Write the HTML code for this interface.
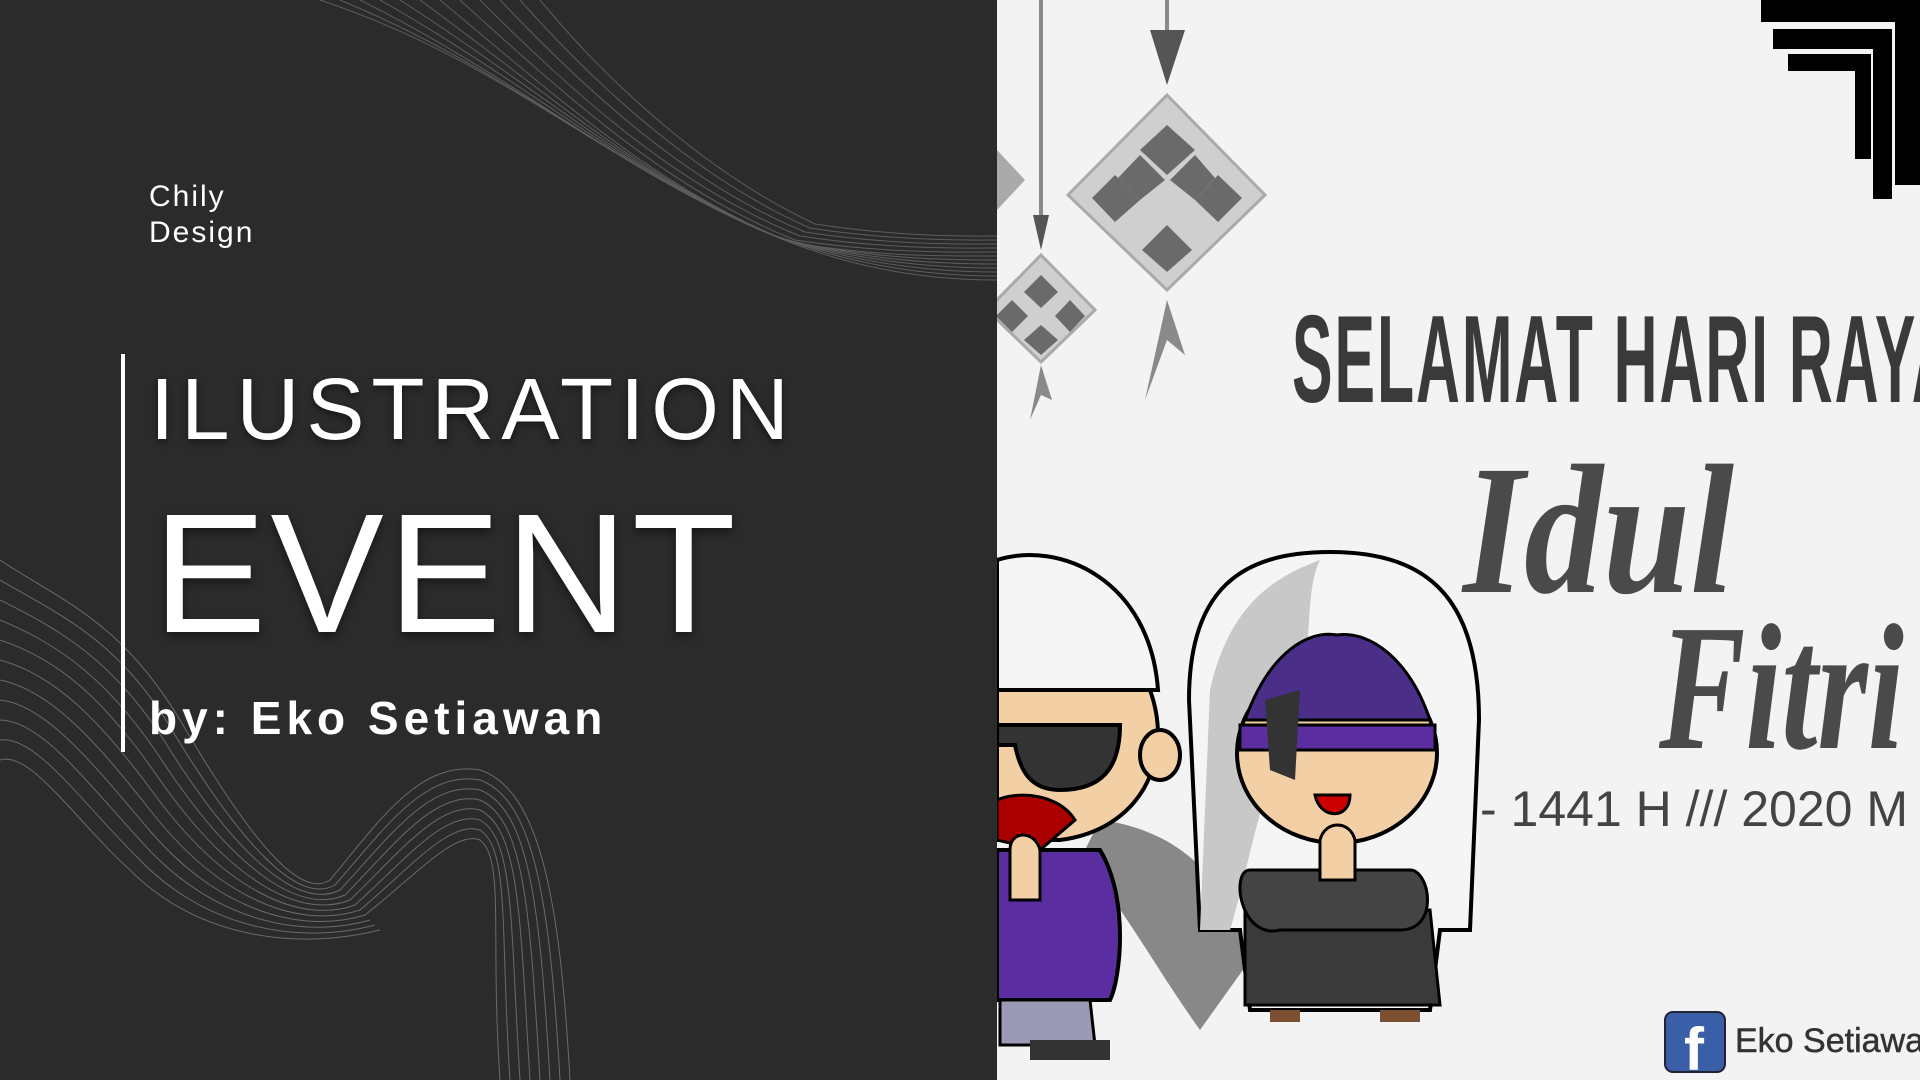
<!DOCTYPE html>
<html><head><meta charset="utf-8"><style>
*{margin:0;padding:0}
body{width:1920px;height:1080px;overflow:hidden;background:#f3f3f3;position:relative;font-family:"Liberation Sans",sans-serif}
#left{position:absolute;left:0;top:0;width:997px;height:1080px;background:#2c2b2c;overflow:hidden}
.t{position:absolute;color:#fff;white-space:nowrap}
</style></head><body>
<div id="left">
<svg width="997" height="1080" style="position:absolute;left:0;top:0" fill="none" stroke="#6a6a6a" stroke-width="1">
<g opacity="0.8">
<path d="M320 0 C500 60 600 160 760 230 C850 270 930 280 997 280"/>
<path d="M340 0 C510 70 610 165 765 232 C855 268 935 276 997 276"/>
<path d="M360 0 C520 80 620 170 770 234 C860 266 940 272 997 272"/>
<path d="M380 0 C530 85 630 175 775 236 C865 264 945 268 997 268"/>
<path d="M400 0 C540 90 640 180 780 238 C870 262 950 264 997 264"/>
<path d="M420 0 C550 95 650 185 785 240 C875 260 955 260 997 260"/>
<path d="M440 0 C560 100 660 190 790 242 C880 258 960 256 997 256"/>
<path d="M460 0 C570 100 670 190 795 240 C885 254 965 252 997 252"/>
<path d="M480 0 C580 100 680 188 800 236 C890 250 970 248 997 248"/>
<path d="M500 0 C590 95 690 185 805 232 C895 246 975 244 997 244"/>
<path d="M520 0 C600 90 700 180 810 228 C900 242 980 240 997 240"/>
<path d="M540 0 C610 85 710 175 815 224 C905 238 985 236 997 236"/>
</g>
<g>
<path d="M0 560 C60 600 120 620 180 720 C250 840 300 900 330 880 C380 820 420 760 480 770 C540 790 560 900 570 1080"/>
<path d="M0 580 C60 615 120 640 175 735 C245 850 300 905 335 885 C385 828 425 770 480 780 C535 800 550 905 560 1080"/>
<path d="M0 600 C60 630 115 660 170 750 C240 860 300 910 340 890 C390 836 430 780 480 790 C530 810 540 910 550 1080"/>
<path d="M0 620 C60 645 110 680 165 765 C235 870 300 915 345 895 C395 844 435 790 480 800 C525 820 530 915 540 1080"/>
<path d="M0 640 C60 660 105 700 160 780 C230 880 300 920 350 900 C400 852 440 800 480 810 C520 830 520 920 530 1080"/>
<path d="M0 660 C55 675 100 720 155 795 C225 890 300 925 355 905 C405 860 445 810 480 820 C515 840 510 925 520 1080"/>
<path d="M0 680 C50 690 95 740 150 810 C220 900 300 930 360 910 C410 868 450 820 480 830 C510 850 500 930 510 1080"/>
<path d="M0 700 C45 705 90 760 145 825 C215 910 300 935 365 915 C415 876 455 830 480 840 C505 860 490 935 500 1080"/>
<path d="M0 720 C40 720 85 780 140 840 C210 920 300 940 370 920"/>
<path d="M0 740 C35 735 80 800 135 855 C205 930 300 945 375 925"/>
<path d="M0 760 C30 750 75 820 130 870 C200 940 300 950 380 930"/>
</g>
</svg>
<div class="t" style="left:149px;top:179px;font-size:30px;line-height:36px;letter-spacing:2px">Chily<br>Design</div>
<div style="position:absolute;left:121px;top:354px;width:4px;height:398px;background:#fff"></div>
<div class="t" style="left:150px;top:360px;font-size:87px;line-height:100px;letter-spacing:7px;text-shadow:0 3px 8px rgba(0,0,0,.5)">ILUSTRATION</div>
<div class="t" style="left:153px;top:489px;font-size:170px;line-height:170px;letter-spacing:4px;text-shadow:0 4px 10px rgba(0,0,0,.5)">EVENT</div>
<div class="t" style="left:149px;top:690px;font-size:46px;line-height:56px;letter-spacing:5px;font-weight:bold">by: Eko Setiawan</div>
</div>

<svg width="923" height="1080" style="position:absolute;left:997px;top:0" viewBox="997 0 923 1080">
<g fill="#000">
<rect x="1761" y="0" width="159" height="22"/><rect x="1895" y="0" width="25" height="185"/>
<rect x="1773" y="29" width="119" height="20"/><rect x="1873" y="29" width="19" height="170"/>
<rect x="1788" y="54" width="83" height="17"/><rect x="1855" y="54" width="16" height="105"/>
</g>
<g stroke="#8a8a8a" stroke-width="4">
<line x1="1041" y1="0" x2="1041" y2="215"/><line x1="1167" y1="0" x2="1167" y2="70"/>
</g>
<polygon points="1033,215 1049,215 1041,250" fill="#555"/>
<polygon points="1150,30 1185,30 1167,85" fill="#555"/>
<g>
<polygon points="1167,95 1265,195 1167,290 1068,195" fill="#cfcfcf" stroke="#aaa" stroke-width="3"/>
<g fill="#6a6a6a"><polygon points="1167,125 1195,150 1167,175 1140,150"/><polygon points="1115,175 1140,200 1115,222 1092,198"/><polygon points="1218,175 1242,198 1218,222 1195,200"/><polygon points="1167,225 1192,250 1167,272 1142,250"/><polygon points="1140,155 1165,180 1140,200 1118,178"/><polygon points="1195,155 1215,178 1195,200 1170,180"/></g>
<polygon points="1041,255 1095,310 1041,362 987,310" fill="#cfcfcf" stroke="#aaa" stroke-width="3"/>
<g fill="#6a6a6a"><polygon points="1041,275 1058,292 1041,308 1024,292"/><polygon points="1012,300 1028,316 1012,332 996,316"/><polygon points="1070,300 1085,316 1070,332 1055,316"/><polygon points="1041,325 1058,340 1041,355 1024,340"/></g>
<polygon points="997,150 1025,180 997,210" fill="#aaa"/>
<polygon points="1167,300 1185,355 1167,340 1145,400" fill="#8a8a8a"/>
<polygon points="1041,365 1052,400 1041,395 1030,420" fill="#8a8a8a"/>
</g>
<text x="0" y="402" font-family="Liberation Sans,sans-serif" font-weight="bold" font-size="124" fill="#3a3a3a" transform="translate(1292 0) scale(0.49 1)" letter-spacing="4">SELAMAT HARI RAYA</text>
<text x="0" y="592" font-family="Liberation Serif,serif" font-style="italic" font-weight="bold" font-size="185" fill="#4a4a4a" transform="translate(1463 0) scale(0.85 1)">Idul</text>
<text x="0" y="748" font-family="Liberation Serif,serif" font-style="italic" font-weight="bold" font-size="180" fill="#4a4a4a" transform="translate(1659 0) scale(0.72 1)">Fitri</text>
<text x="1480" y="826" font-family="Liberation Sans,sans-serif" font-size="50" fill="#444">- 1441 H /// 2020 M -</text>
<rect x="1665" y="1012" width="60" height="60" rx="8" fill="#3b5ea8" stroke="#223" stroke-width="2"/>
<text x="1684" y="1070" font-family="Liberation Sans,sans-serif" font-weight="bold" font-size="60" fill="#fff">f</text>
<text x="1735" y="1052" font-family="Liberation Sans,sans-serif" font-size="34" fill="#333" stroke="#333" stroke-width="0.5">Eko Setiawan</text>
<path d="M1100 820 C1180 830 1230 880 1250 960 L1200 1030 C1150 960 1120 900 1080 860Z" fill="#888"/>
<path d="M997 560 C1060 540 1150 580 1158 690 L997 690Z" fill="#f5f5f5" stroke="#000" stroke-width="4"/>
<path d="M997 690 L1150 690 C1175 760 1140 830 1060 840 L997 840Z" fill="#f3cfa5" stroke="#000" stroke-width="4"/>
<ellipse cx="1160" cy="755" rx="20" ry="25" fill="#f3cfa5" stroke="#000" stroke-width="4"/>
<path d="M997 725 L1120 725 C1120 770 1100 790 1060 790 C1030 790 1020 770 1015 745 L997 745Z" fill="#333" stroke="#000" stroke-width="4"/>
<path d="M997 800 C1020 790 1060 795 1075 820 L1040 850 L997 840Z" fill="#a00" stroke="#000" stroke-width="3"/>
<path d="M997 850 L1100 850 C1130 900 1120 980 1110 1000 L997 1000Z" fill="#5a2ea0" stroke="#000" stroke-width="4"/>
<path d="M1000 1000 L1090 1000 L1095 1045 L1000 1045Z" fill="#9a9ab5" stroke="#000" stroke-width="3"/>
<path d="M1030 1040 L1110 1040 L1110 1060 L1030 1060Z" fill="#333"/>
<path d="M1010 850 C1010 830 1035 830 1040 850 L1040 900 L1010 900Z" fill="#f3cfa5" stroke="#000" stroke-width="3"/>
<path d="M1189 700 C1189 590 1240 552 1330 552 C1430 552 1479 600 1479 720 L1470 930 L1440 930 L1430 1010 L1250 1010 L1240 930 L1200 930Z" fill="#f5f5f5" stroke="#000" stroke-width="4"/>
<path d="M1210 690 C1230 600 1280 575 1320 560 C1300 600 1320 680 1280 750 C1260 800 1240 900 1230 930 L1200 930 Z" fill="#c8c8c8"/>
<path d="M1245 910 L1430 910 L1440 1005 L1245 1005Z" fill="#3a3a3a" stroke="#000" stroke-width="3"/>
<path d="M1250 870 C1230 870 1240 940 1280 930 L1400 930 C1440 930 1430 870 1410 870Z" fill="#444" stroke="#000" stroke-width="3"/>
<ellipse cx="1337" cy="753" rx="100" ry="90" fill="#f3cfa5" stroke="#000" stroke-width="4"/>
<path d="M1245 720 C1270 650 1310 630 1337 635 C1370 630 1410 660 1430 720Z" fill="#4a2e88" stroke="#000" stroke-width="3"/>
<rect x="1240" y="725" width="195" height="25" fill="#5a2ea0" stroke="#000" stroke-width="3"/>
<path d="M1265 700 L1300 690 L1295 780 L1270 770Z" fill="#333"/>
<path d="M1315 795 C1320 820 1350 820 1350 795Z" fill="#c00" stroke="#000" stroke-width="3"/>
<path d="M1320 840 C1325 820 1350 820 1355 840 L1355 880 L1320 880Z" fill="#f3cfa5" stroke="#000" stroke-width="3"/>
<path d="M1270 1010 L1300 1010 L1300 1022 L1270 1022Z M1380 1010 L1420 1010 L1420 1022 L1380 1022Z" fill="#7a5030"/>
</svg>
</body></html>
